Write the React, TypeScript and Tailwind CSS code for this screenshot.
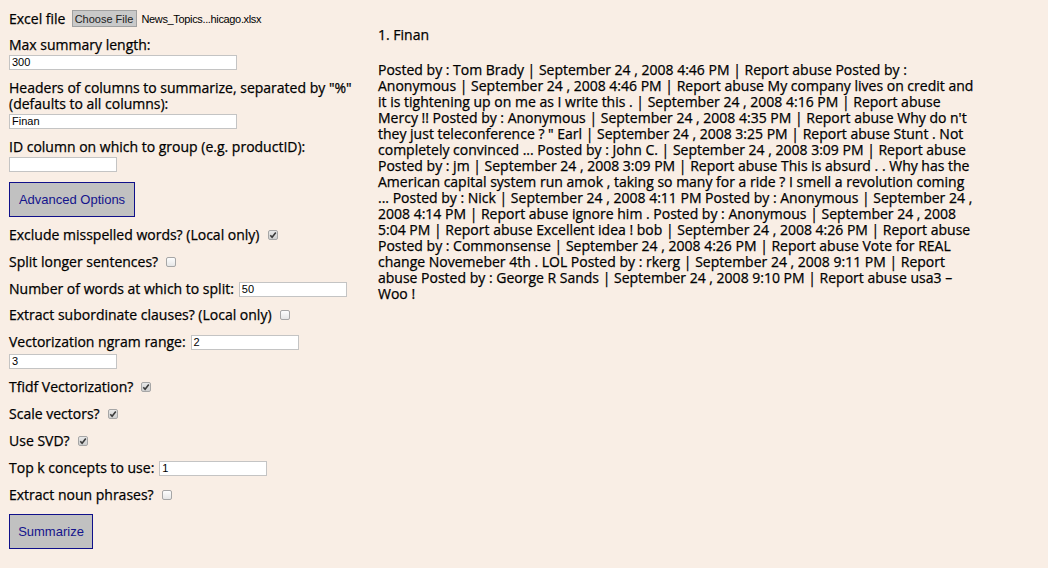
import React from "react";

const lines = [
  "Posted by : Tom Brady | September 24 , 2008 4:46 PM | Report abuse Posted by :",
  "Anonymous | September 24 , 2008 4:46 PM | Report abuse My company lives on credit and",
  "it is tightening up on me as I write this . | September 24 , 2008 4:16 PM | Report abuse",
  "Mercy !! Posted by : Anonymous | September 24 , 2008 4:35 PM | Report abuse Why do n't",
  "they just teleconference ? \" Earl | September 24 , 2008 3:25 PM | Report abuse Stunt . Not",
  "completely convinced ... Posted by : John C. | September 24 , 2008 3:09 PM | Report abuse",
  "Posted by : jm | September 24 , 2008 3:09 PM | Report abuse This is absurd . . Why has the",
  "American capital system run amok , taking so many for a ride ? I smell a revolution coming",
  "... Posted by : Nick | September 24 , 2008 4:11 PM Posted by : Anonymous | September 24 ,",
  "2008 4:14 PM | Report abuse ignore him . Posted by : Anonymous | September 24 , 2008",
  "5:04 PM | Report abuse Excellent idea ! bob | September 24 , 2008 4:26 PM | Report abuse",
  "Posted by : Commonsense | September 24 , 2008 4:26 PM | Report abuse Vote for REAL",
  "change Novemeber 4th . LOL Posted by : rkerg | September 24 , 2008 9:11 PM | Report",
  "abuse Posted by : George R Sands | September 24 , 2008 9:10 PM | Report abuse usa3 –",
  "Woo !",
];

function Check({ checked }: { checked?: boolean }) {
  return (
    <span
      className={`ml-[8px] inline-flex h-[10px] w-[10px] items-center justify-center rounded-[2px] border border-[#a6a6a6] bg-gradient-to-b ${
        checked ? "from-[#e8e8e8] to-[#cfcfcf]" : "from-[#fdfdfd] to-[#e6e6e6]"
      }`}
    >
      {checked && (
        <svg width="8" height="8" viewBox="0 0 8 8">
          <path d="M1.3 4.3 L3.1 6.2 L6.8 1.6" fill="none" stroke="#3a3a3a" strokeWidth="1.6" />
        </svg>
      )}
    </span>
  );
}

function TextInput({ value, w, cls = "" }: { value: string; w: string; cls?: string }) {
  return (
    <span
      className={`inline-flex h-[15px] items-center border border-[#c4c4c4] bg-white pl-[2px] text-[11px] leading-none text-black [-webkit-text-stroke:0px] font-['Liberation_Sans',Arial,sans-serif] ${w} ${cls}`}
    >
      {value === "" ? "\u00a0" : value}
    </span>
  );
}

function Row({ children, mt }: { children: React.ReactNode; mt: string }) {
  return <div className={`flex h-[16px] items-center whitespace-nowrap ${mt}`}>{children}</div>;
}

export default function App() {
  return (
    <div className="min-h-[568px] w-[1048px] bg-[#f9eee5] text-black font-['Open_Sans','DejaVu_Sans',sans-serif] text-[14px] leading-[16px] [-webkit-text-stroke:0.25px_#000]">
      <div className="flex">
        {/* Left form column */}
        <div className="w-[369px] shrink-0 pl-[9px] pt-[9px]">
          <div className="flex h-[19px] items-center whitespace-nowrap">
            <span>Excel file</span>
            <span className="ml-[6px] inline-flex h-[17px] w-[65px] items-center justify-center border border-[#a0a0a0] bg-[#c9c9c9] text-[11px] text-[#222] [-webkit-text-stroke:0px] font-['Liberation_Sans',Arial,sans-serif]">
              Choose File
            </span>
            <span className="ml-[5px] text-[11px] tracking-[-0.35px] [-webkit-text-stroke:0px] font-['Liberation_Sans',Arial,sans-serif]">
              News_Topics...hicago.xlsx
            </span>
          </div>

          <div className="mt-[9px] whitespace-nowrap">Max summary length:</div>
          <TextInput value="300" w="w-[228px]" cls="mt-[2px]" />

          <div className="mt-[10px] whitespace-nowrap">
            Headers of columns to summarize, separated by "%"
            <br />
            (defaults to all columns):
          </div>
          <TextInput value="Finan" w="w-[228px]" cls="mt-[2px]" />

          <div className="mt-[10px] whitespace-nowrap">ID column on which to group (e.g. productID):</div>
          <TextInput value="" w="w-[108px]" cls="mt-[2px]" />

          <div className="mt-[10px]">
            <span className="inline-flex h-[35px] w-[126px] items-center justify-center border border-[#10108a] bg-[#c1c1c1] text-[13px] text-[#14148c] [-webkit-text-stroke:0px] font-['Liberation_Sans',Arial,sans-serif]">
              Advanced Options
            </span>
          </div>

          <Row mt="mt-[10px]">
            <span>Exclude misspelled words? (Local only)</span>
            <Check checked />
          </Row>
          <Row mt="mt-[11px]">
            <span>Split longer sentences?</span>
            <Check />
          </Row>
          <Row mt="mt-[11px]">
            <span>Number of words at which to split:</span>
            <TextInput value="50" w="w-[108px]" cls="ml-[5px]" />
          </Row>
          <Row mt="mt-[10px]">
            <span>Extract subordinate clauses? (Local only)</span>
            <Check />
          </Row>
          <Row mt="mt-[11px]">
            <span>Vectorization ngram range:</span>
            <TextInput value="2" w="w-[108px]" cls="ml-[5px]" />
          </Row>
          <TextInput value="3" w="w-[108px]" cls="mt-[4px]" />

          <Row mt="mt-[10px]">
            <span>Tfidf Vectorization?</span>
            <Check checked />
          </Row>
          <Row mt="mt-[11px]">
            <span>Scale vectors?</span>
            <Check checked />
          </Row>
          <Row mt="mt-[11px]">
            <span>Use SVD?</span>
            <Check checked />
          </Row>
          <Row mt="mt-[11px]">
            <span>Top k concepts to use:</span>
            <TextInput value="1" w="w-[108px]" cls="ml-[5px]" />
          </Row>
          <Row mt="mt-[11px]">
            <span>Extract noun phrases?</span>
            <Check />
          </Row>

          <div className="mt-[11px]">
            <span className="inline-flex h-[35px] w-[84px] items-center justify-center border border-[#10108a] bg-[#c1c1c1] text-[13px] text-[#14148c] [-webkit-text-stroke:0px] font-['Liberation_Sans',Arial,sans-serif]">
              Summarize
            </span>
          </div>
        </div>

        {/* Right results column */}
        <div className="pl-[9px] pt-[27px]">
          <div className="whitespace-nowrap">1. Finan</div>
          <div className="mt-[19px]">
            {lines.map((l, i) => (
              <div key={i} className="whitespace-nowrap">
                {l}
              </div>
            ))}
          </div>
        </div>
      </div>
    </div>
  );
}
